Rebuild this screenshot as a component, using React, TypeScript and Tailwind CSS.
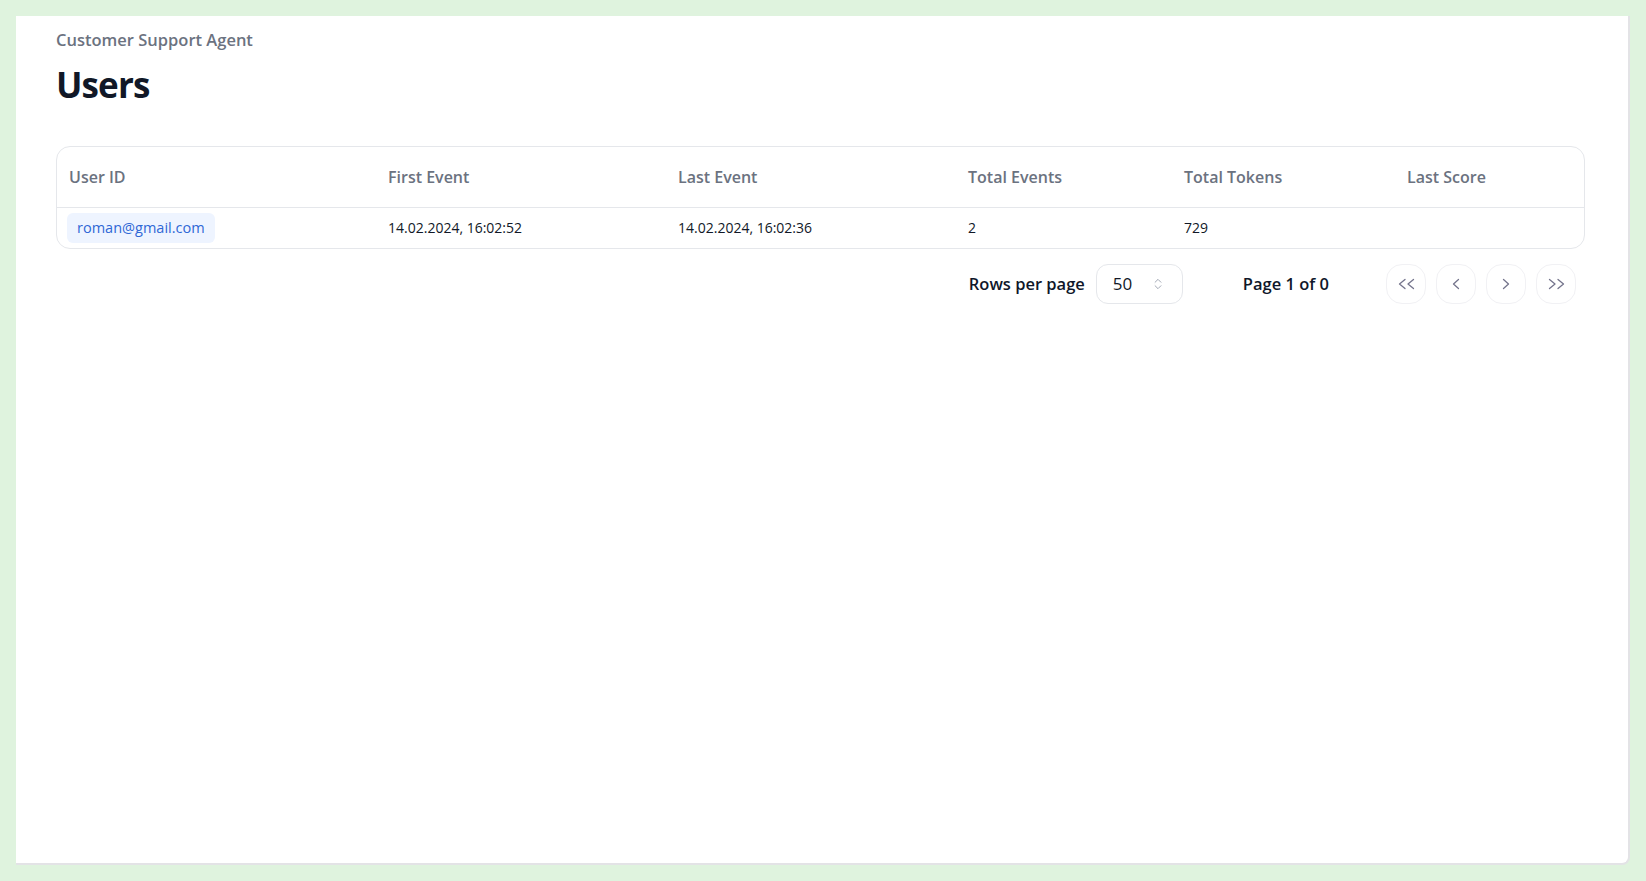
import React from "react";

const font = { fontFamily: '"Open Sans", "Noto Sans", sans-serif' };

function ChevL({ double, right }: { double?: boolean; right?: boolean }) {
  const stroke = "#74748c";
  if (double) {
    return (
      <svg width="17" height="12" viewBox="0 0 17 12" fill="none" style={{ transform: right ? "scaleX(-1)" : undefined }}>
        <polyline points="7,1.5 1.5,6 7,10.5" stroke={stroke} strokeWidth="1.3" strokeLinecap="round" strokeLinejoin="round" />
        <polyline points="15.5,1.5 10,6 15.5,10.5" stroke={stroke} strokeWidth="1.3" strokeLinecap="round" strokeLinejoin="round" />
      </svg>
    );
  }
  return (
    <svg width="8" height="12" viewBox="0 0 8 12" fill="none" style={{ transform: right ? "scaleX(-1)" : undefined }}>
      <polyline points="6.5,1.5 1.5,6 6.5,10.5" stroke={stroke} strokeWidth="1.3" strokeLinecap="round" strokeLinejoin="round" />
    </svg>
  );
}

function UpDown() {
  return (
    <svg width="14" height="14" viewBox="0 0 24 24" fill="none" stroke="#9ca3af" strokeWidth="1.6" strokeLinecap="round" strokeLinejoin="round">
      <path d="m7 15 5 5 5-5" />
      <path d="m7 9 5-5 5 5" />
    </svg>
  );
}

export default function App() {
  const headers = ["User ID", "First Event", "Last Event", "Total Events", "Total Tokens", "Last Score"];
  return (
    <div className="h-screen bg-[#dff3de] p-4 flex flex-col" style={font}>
      <div className="flex-1 bg-white border-r-2 border-b-2 border-[#e3e3e6] rounded-br-lg pl-10 pr-[43px] pt-3">
        <div className="text-[16.5px] leading-6 font-semibold text-[#6b7280]">Customer Support Agent</div>
        <h1 className="mt-[13px] text-[35px] leading-10 font-bold tracking-tight text-[#111827]">Users</h1>

        <div className="mt-[41px] border border-[#e5e7eb] rounded-[14px] overflow-hidden">
          <table className="w-full table-fixed border-collapse">
            <colgroup>
              <col className="w-[319px]" />
              <col className="w-[290px]" />
              <col className="w-[290px]" />
              <col className="w-[216px]" />
              <col className="w-[223px]" />
              <col />
            </colgroup>
            <thead>
              <tr className="border-b border-[#e5e7eb]">
                {headers.map((h) => (
                  <th key={h} className="h-[60px] px-3 text-left align-middle text-[16px] leading-6 font-semibold text-[#6b7280]">
                    {h}
                  </th>
                ))}
              </tr>
            </thead>
            <tbody>
              <tr>
                <td className="h-[41px] pl-[10px] pr-3 align-middle">
                  <span className="inline-flex h-[30px] items-center rounded-md bg-[#eef4ff] px-[10px] text-[14.5px] font-medium text-[#2f68d6]">
                    roman@gmail.com
                  </span>
                </td>
                <td className="px-3 align-middle text-[14px] text-[#111827]">14.02.2024, 16:02:52</td>
                <td className="px-3 align-middle text-[14px] text-[#111827]">14.02.2024, 16:02:36</td>
                <td className="px-3 align-middle text-[14px] text-[#111827]">2</td>
                <td className="px-3 align-middle text-[14px] text-[#111827]">729</td>
                <td className="px-3 align-middle text-[14px] text-[#111827]"></td>
              </tr>
            </tbody>
          </table>
        </div>

        <div className="mt-[15px] flex items-center justify-end pr-[9px]">
          <div className="flex items-center gap-[11px]">
            <span className="text-[16.5px] font-semibold text-[#0f172a]">Rows per page</span>
            <div className="flex h-10 w-[87px] items-center justify-between rounded-xl border border-[#e5e7eb] pl-4 pr-[17px]">
              <span className="text-[17px] text-[#111827]">50</span>
              <UpDown />
            </div>
          </div>
          <span className="ml-[60px] text-[16.5px] font-semibold text-[#0f172a]">Page 1 of 0</span>
          <div className="ml-[57px] flex items-center gap-[10px]">
            <button className="flex h-10 w-10 items-center justify-center rounded-2xl border border-[#f1f1f4] bg-white">
              <ChevL double />
            </button>
            <button className="flex h-10 w-10 items-center justify-center rounded-2xl border border-[#f1f1f4] bg-white">
              <ChevL />
            </button>
            <button className="flex h-10 w-10 items-center justify-center rounded-2xl border border-[#f1f1f4] bg-white">
              <ChevL right />
            </button>
            <button className="flex h-10 w-10 items-center justify-center rounded-2xl border border-[#f1f1f4] bg-white">
              <ChevL double right />
            </button>
          </div>
        </div>
      </div>
    </div>
  );
}
